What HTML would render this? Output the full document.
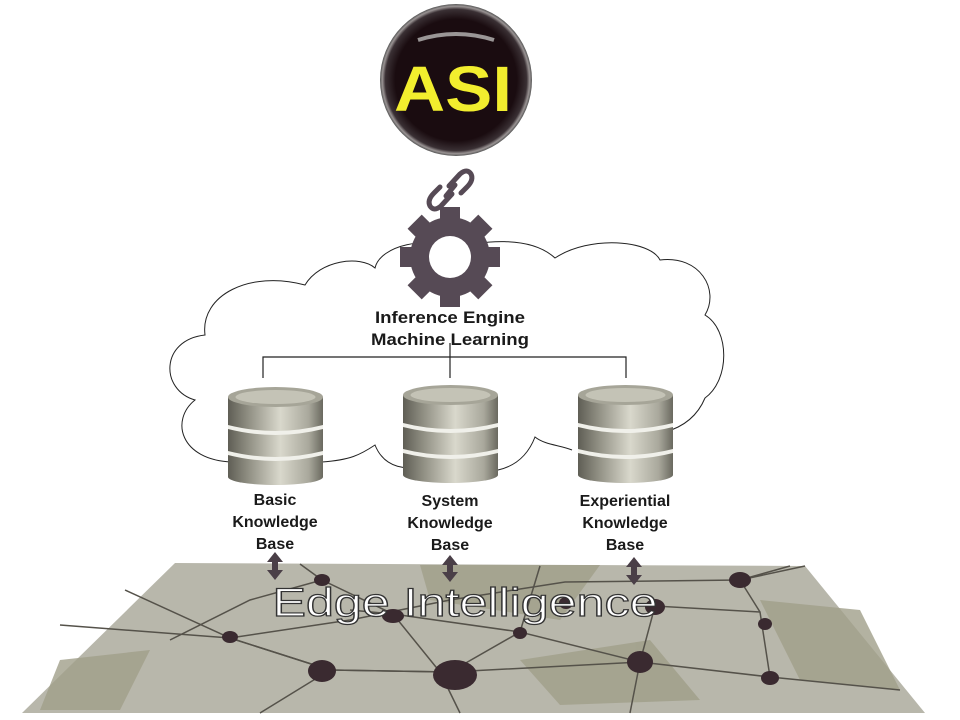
<!DOCTYPE html>
<html><head><meta charset="utf-8"><style>
html,body{margin:0;padding:0;background:#fff;width:960px;height:720px;overflow:hidden}
svg{display:block}
</style></head><body>
<svg width="960" height="720" viewBox="0 0 960 720" xmlns="http://www.w3.org/2000/svg">
<defs>
<linearGradient id="cyl" x1="0" x2="1" y1="0" y2="0">
<stop offset="0" stop-color="#5f5e55"/><stop offset="0.2" stop-color="#8d8c80"/><stop offset="0.55" stop-color="#d9d8cc"/><stop offset="0.85" stop-color="#a9a89c"/><stop offset="1" stop-color="#6a695f"/>
</linearGradient>
<radialGradient id="ball" cx="0.5" cy="0.5" r="0.5">
<stop offset="0.8" stop-color="#1a0c10"/><stop offset="0.93" stop-color="#3a3034"/><stop offset="0.97" stop-color="#9a9494"/><stop offset="1" stop-color="#555"/>
</radialGradient>
<g id="db">
<rect x="0" y="12" width="95" height="80" fill="url(#cyl)"/>
<ellipse cx="47.5" cy="92" rx="47.5" ry="8" fill="url(#cyl)"/>
<ellipse cx="47.5" cy="12" rx="47.5" ry="10" fill="#a6a598"/>
<ellipse cx="47.5" cy="12" rx="40" ry="7" fill="#c4c3b6"/>
<path d="M0 40 Q47.5 52 95 40 L95 44 Q47.5 56 0 44Z" fill="#f0f0ea"/>
<path d="M0 66 Q47.5 78 95 66 L95 70 Q47.5 82 0 70Z" fill="#f0f0ea"/>
</g>
</defs>

<polygon points="175,563 805,566 925,713 22,713" fill="#b8b7ab"/>
<g fill="#a09f89" opacity="0.8">
<path d="M420 565 L600 565 L560 620 L430 600Z"/>
<path d="M520 660 L650 640 L700 700 L560 705Z"/>
<path d="M760 600 L860 610 L900 690 L800 680Z"/>
<path d="M60 660 L150 650 L120 710 L40 710Z"/>
</g>
<g stroke="#55524a" stroke-width="1.5" fill="none">
<path d="M60 625 L230 638 L350 620 L450 600 L565 582 L740 580 L805 566"/>
<path d="M125 590 L230 638 L330 670 L450 672 L640 662 L770 677 L900 690"/>
<path d="M230 638 L330 670 L260 713"/>
<path d="M330 670 L450 672 L520 632 L640 662"/>
<path d="M440 672 L460 713"/>
<path d="M640 662 L630 713"/>
<path d="M770 677 L760 612 L740 580 L790 566"/>
<path d="M640 662 L655 606 L760 612"/>
<path d="M300 564 L322 580 L393 614 L440 672"/>
<path d="M520 632 L540 566"/>
<path d="M170 640 L250 600 L322 580"/>
<path d="M350 610 L393 614 L520 632"/>
</g>
<g fill="#3a2a30">
<ellipse cx="455" cy="675" rx="22" ry="15"/>
<ellipse cx="322" cy="671" rx="14" ry="11"/>
<ellipse cx="640" cy="662" rx="13" ry="11"/>
<ellipse cx="393" cy="616" rx="11" ry="7"/>
<ellipse cx="230" cy="637" rx="8" ry="6"/>
<ellipse cx="520" cy="633" rx="7" ry="6"/>
<ellipse cx="322" cy="580" rx="8" ry="6"/>
<ellipse cx="740" cy="580" rx="11" ry="8"/>
<ellipse cx="765" cy="624" rx="7" ry="6"/>
<ellipse cx="770" cy="678" rx="9" ry="7"/>
<ellipse cx="655" cy="607" rx="10" ry="8"/>
<ellipse cx="566" cy="603" rx="7" ry="6"/>
</g>
<text x="465" y="616" text-anchor="middle" font-family="Liberation Sans, sans-serif" font-size="40" fill="#fff" stroke="#333" stroke-width="1.2" textLength="385" lengthAdjust="spacingAndGlyphs">Edge Intelligence</text>

<path d="M232 462 C180 460 170 420 195 400 C160 390 160 340 205 335 C200 295 250 270 305 285 C320 260 360 255 375 268 C380 245 430 235 450 250 C480 240 530 235 555 258 C590 235 650 240 660 260 C700 255 720 290 705 315 C730 330 730 380 705 398 C700 410 690 425 665 432" fill="none" stroke="#222" stroke-width="1"/>
<path d="M322 462 C350 460 360 455 375 445 C385 470 410 470 420 465" fill="none" stroke="#222" stroke-width="1"/>
<path d="M498 470 C520 465 530 450 535 437 C545 445 560 445 572 450" fill="none" stroke="#222" stroke-width="1"/>

<path d="M263 378 L263 357 L626 357 L626 378 M450 343 L450 378" fill="none" stroke="#222" stroke-width="1.2"/>

<use href="#db" x="228" y="385"/>
<use href="#db" x="403" y="383"/>
<use href="#db" x="578" y="383"/>

<g font-family="Liberation Sans, sans-serif" font-size="17" font-weight="bold" fill="#1a1a1a" text-anchor="middle">
<text x="450" y="323" textLength="150" lengthAdjust="spacingAndGlyphs">Inference Engine</text>
<text x="450" y="345" textLength="158" lengthAdjust="spacingAndGlyphs">Machine Learning</text>
</g>
<g font-family="Liberation Sans, sans-serif" font-size="16" font-weight="bold" fill="#1a1a1a" text-anchor="middle">
<text x="275" y="505">Basic</text><text x="275" y="527">Knowledge</text><text x="275" y="549">Base</text>
<text x="450" y="506">System</text><text x="450" y="528">Knowledge</text><text x="450" y="550">Base</text>
<text x="625" y="506">Experiential</text><text x="625" y="528">Knowledge</text><text x="625" y="550">Base</text>
</g>

<g fill="#4a3f47">
<path d="M275 552 L283 562 L278 562 L278 570 L283 570 L275 580 L267 570 L272 570 L272 562 L267 562Z"/>
<path d="M450 555 L458 565 L453 565 L453 572 L458 572 L450 582 L442 572 L447 572 L447 565 L442 565Z"/>
<path d="M634 557 L642 567 L637 567 L637 575 L642 575 L634 585 L626 575 L631 575 L631 567 L626 567Z"/>
</g>

<g transform="translate(450,257)" fill="#564a55">
<circle r="40"/>
<g>
<rect x="-10" y="-50" width="20" height="18"/>
<rect x="-10" y="-50" width="20" height="18" transform="rotate(45)"/>
<rect x="-10" y="-50" width="20" height="18" transform="rotate(90)"/>
<rect x="-10" y="-50" width="20" height="18" transform="rotate(135)"/>
<rect x="-10" y="-50" width="20" height="18" transform="rotate(180)"/>
<rect x="-10" y="-50" width="20" height="18" transform="rotate(225)"/>
<rect x="-10" y="-50" width="20" height="18" transform="rotate(270)"/>
<rect x="-10" y="-50" width="20" height="18" transform="rotate(315)"/>
</g>
<circle r="21" fill="#fff"/>
</g>
<g fill="none" stroke="#564a55" stroke-width="5" stroke-linecap="round" stroke-linejoin="round">
<path d="M449 186 L460 174 Q467 168 471 174 Q474 180 467 187 L461 193"/>
<path d="M452 194 L441 206 Q434 212 430 206 Q427 200 434 193 L440 187"/>
<path d="M446 196 L455 185"/>
</g>

<circle cx="456" cy="80" r="76" fill="url(#ball)"/>
<path d="M418 40 Q456 28 494 40" stroke="#9a9696" stroke-width="4" fill="none"/>
<text x="453" y="111" text-anchor="middle" font-family="Liberation Sans, sans-serif" font-size="64" font-weight="bold" fill="#f2ee2e" textLength="118" lengthAdjust="spacingAndGlyphs">ASI</text>
</svg>
</body></html>
